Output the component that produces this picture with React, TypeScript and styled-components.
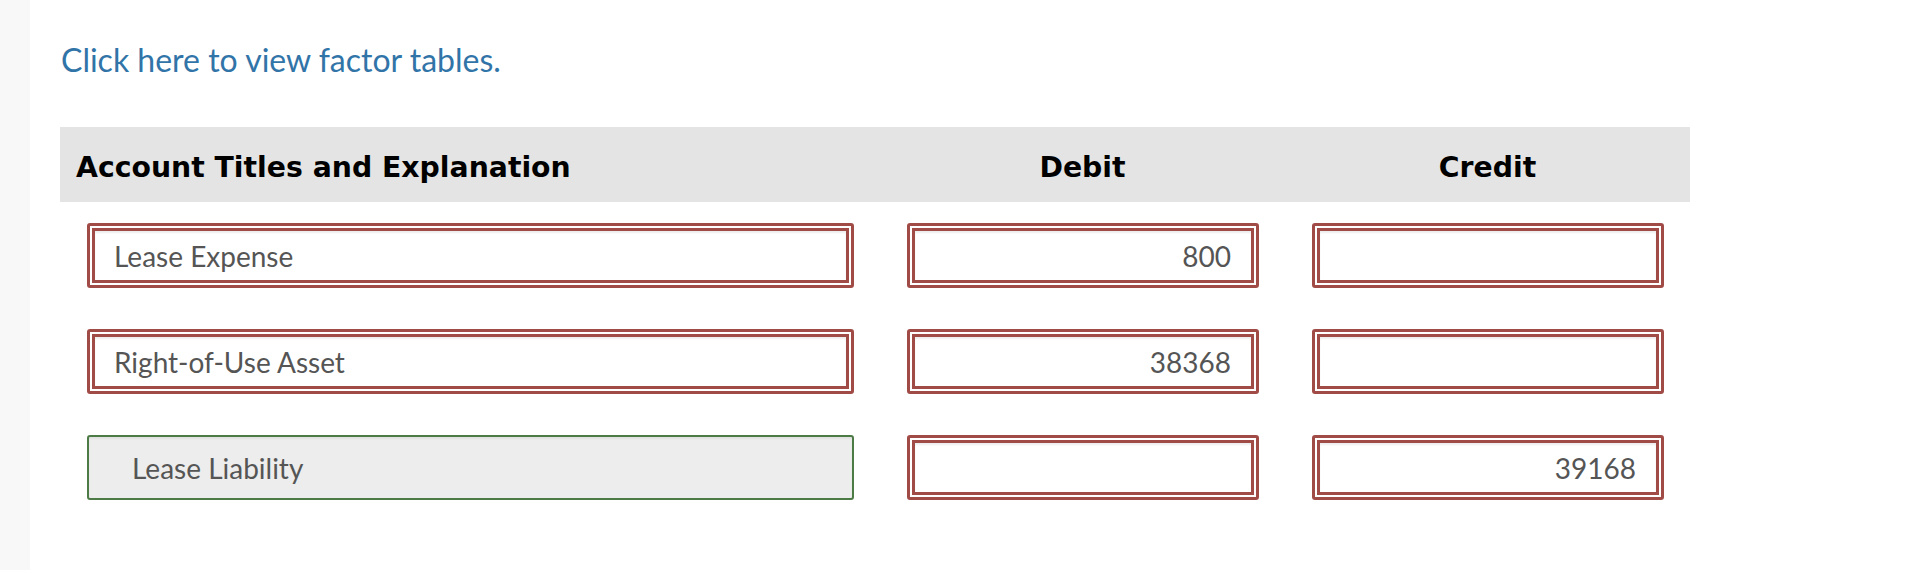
import React from "react";
import styled, { createGlobalStyle } from "styled-components";

const GlobalStyle = createGlobalStyle`
  html, body {
    margin: 0;
    padding: 0;
    background: #ffffff;
    font-family: Lato, "Open Sans", sans-serif;
  }
`;

const Page = styled.div`
  display: flex;
  min-height: 100vh;
`;

const SideStrip = styled.div`
  width: 30px;
  flex: none;
  background: #f8f8f8;
`;

const Main = styled.main`
  flex: 1;
  padding: 41px 0 0 30px;
`;

const FactorLink = styled.a`
  display: inline-block;
  margin-left: 1px;
  font-family: Lato, sans-serif;
  font-size: 32px;
  line-height: 38px;
  color: #3174a8;
  text-decoration: none;
  cursor: pointer;
`;

const Table = styled.div`
  margin-top: 48px;
  width: 1630px;
  display: grid;
  grid-template-columns: 820px 405px 405px;
`;

const HeaderCell = styled.div<{ $align: "left" | "center" }>`
  box-sizing: border-box;
  height: 75px;
  background: #e4e4e4;
  display: flex;
  align-items: center;
  justify-content: ${(p) => (p.$align === "left" ? "flex-start" : "center")};
  padding-top: 5px;
  padding-left: ${(p) => (p.$align === "left" ? "16px" : "0")};
  font-family: "DejaVu Sans", Verdana, sans-serif;
  font-weight: bold;
  font-size: 28.3px;
  color: #000;
`;

const Body = styled.div`
  grid-column: 1 / -1;
  display: grid;
  grid-template-columns: 820px 405px 405px;
  row-gap: 41px;
  margin-top: 21px;
`;

const Cell = styled.div`
  padding: 0 26px 0 27px;
`;

const ErrorFrame = styled.div`
  box-sizing: border-box;
  height: 65px;
  border: 3px solid #a14b47;
  border-radius: 3px;
  padding: 2px;
  background: #fff;
`;

const ErrorInput = styled.input<{ $align: "left" | "right" }>`
  box-sizing: border-box;
  display: block;
  width: 100%;
  height: 100%;
  margin: 0;
  border: 3px solid #a14b47;
  outline: none;
  background: #fff;
  box-shadow: inset 0 2px 2px rgba(0, 0, 0, 0.07);
  font-family: Lato, sans-serif;
  font-size: 28px;
  color: #555555;
  text-align: ${(p) => p.$align};
  padding: ${(p) => (p.$align === "left" ? "0 0 0 19px" : "0 20px 0 0")};
`;

const OkInput = styled.input`
  box-sizing: border-box;
  display: block;
  width: 100%;
  height: 65px;
  margin: 0;
  border: 2px solid #4d7b45;
  border-radius: 3px;
  outline: none;
  background: #ededed;
  box-shadow: inset 0 2px 2px rgba(0, 0, 0, 0.05);
  font-family: Lato, sans-serif;
  font-size: 28px;
  color: #555555;
  padding: 0 0 0 43px;
`;

type Row = {
  account: string;
  accountOk: boolean;
  debit: string;
  credit: string;
};

const rows: Row[] = [
  { account: "Lease Expense", accountOk: false, debit: "800", credit: "" },
  { account: "Right-of-Use Asset", accountOk: false, debit: "38368", credit: "" },
  { account: "Lease Liability", accountOk: true, debit: "", credit: "39168" },
];

export default function App() {
  return (
    <>
      <GlobalStyle />
      <Page>
        <SideStrip />
        <Main>
          <FactorLink>Click here to view factor tables.</FactorLink>
          <Table>
            <HeaderCell $align="left">Account Titles and Explanation</HeaderCell>
            <HeaderCell $align="center">Debit</HeaderCell>
            <HeaderCell $align="center">Credit</HeaderCell>
            <Body>
              {rows.map((r) => (
                <React.Fragment key={r.account}>
                  <Cell>
                    {r.accountOk ? (
                      <OkInput readOnly value={r.account} />
                    ) : (
                      <ErrorFrame>
                        <ErrorInput $align="left" readOnly value={r.account} />
                      </ErrorFrame>
                    )}
                  </Cell>
                  <Cell>
                    <ErrorFrame>
                      <ErrorInput $align="right" readOnly value={r.debit} />
                    </ErrorFrame>
                  </Cell>
                  <Cell>
                    <ErrorFrame>
                      <ErrorInput $align="right" readOnly value={r.credit} />
                    </ErrorFrame>
                  </Cell>
                </React.Fragment>
              ))}
            </Body>
          </Table>
        </Main>
      </Page>
    </>
  );
}
